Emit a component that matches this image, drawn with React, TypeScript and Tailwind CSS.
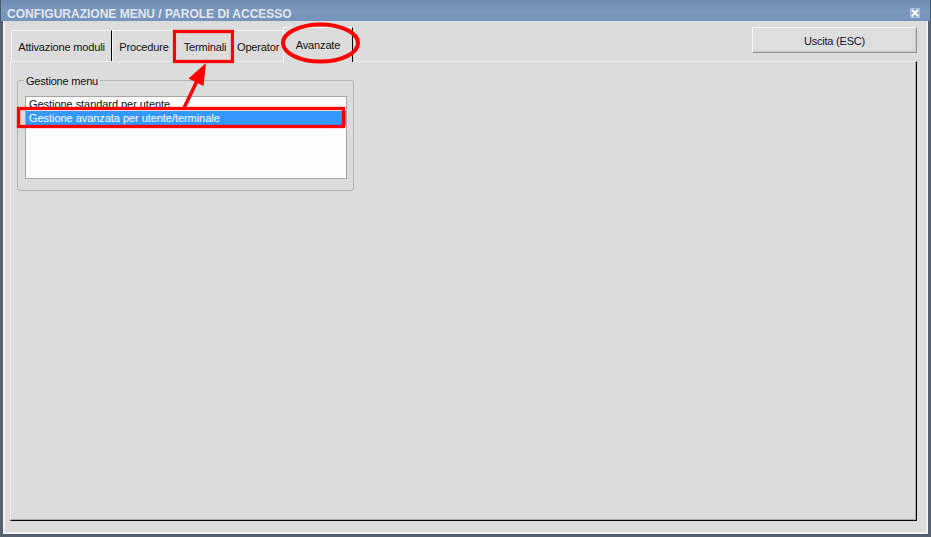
import React from "react"

const tabs = [
  { label: "Attivazione moduli", width: "w-[101px]" },
  { label: "Procedure", width: "w-[64px]" },
  { label: "Terminali", width: "w-[58px]" },
]

function CloseIcon() {
  return (
    <svg width="10" height="10" viewBox="0 0 10 10">
      <rect x="0.5" y="0.5" width="9" height="9" fill="#8aa5c8" stroke="#a9bfdb" />
      <path d="M2.5 2.5 L7.5 7.5 M7.5 2.5 L2.5 7.5" stroke="#ffffff" strokeWidth="2" strokeLinecap="square" />
    </svg>
  )
}

function Annotations() {
  return (
    <svg className="absolute inset-0 z-20 pointer-events-none" width="931" height="537" viewBox="0 0 931 537">
      {/* box around the Terminali tab */}
      <rect x="174.5" y="31.5" width="58" height="30" fill="none" stroke="#ff0000" strokeWidth="3.3" />
      {/* box around the selected list row */}
      <rect x="18.5" y="108.5" width="325" height="18" fill="none" stroke="#ff0000" strokeWidth="3.3" />
      {/* ellipse around Avanzate */}
      <ellipse cx="320.5" cy="43" rx="37.5" ry="18.5" fill="none" stroke="#ff0000" strokeWidth="4" />
      {/* arrow */}
      <line x1="184" y1="108" x2="197" y2="81" stroke="#ff0000" strokeWidth="3.5" />
      <polygon points="206,63 188.5,78.5 203.5,86" fill="#ff0000" />
    </svg>
  )
}

export default function App() {
  return (
    <div
      className="relative w-[931px] h-[537px] flex flex-col bg-[#dcdcdc] text-[#111] overflow-hidden"
      style={{ fontFamily: '"Liberation Sans", Arial, sans-serif' }}
    >
      {/* Title bar */}
      <div className="h-[21px] shrink-0 flex items-start justify-between pl-[6px] pr-[10px] pt-[7px] border-x border-[#4a5a6e] bg-gradient-to-b from-[#6d8bb3] via-[#7a97be] to-[#7694bb]">
        <span className="text-[12px] leading-[14px] font-bold text-[#e2e8f0]">
          CONFIGURAZIONE MENU / PAROLE DI ACCESSO
        </span>
        <div className="mt-[1px]">
          <CloseIcon />
        </div>
      </div>

      {/* Window body */}
      <div className="flex-1 flex border-x-[3px] border-b-[3px] border-[#58626e]">
        <div className="flex-1 flex flex-col border-x-2 border-b-2 border-[#f0f0f0] pl-[5px] pr-[9px] pb-[11px]">
          {/* Tabs + exit button */}
          <div className="h-[40px] shrink-0 flex items-end">
            <div className="ml-[1px] flex items-end text-[11px] leading-[14px] tracking-[-0.15px]">
              {tabs.map((t) => (
                <div
                  key={t.label}
                  className={`${t.width} h-[31px] flex justify-center pt-[9px] border-t border-l border-t-[#f4f4f4] border-l-[#f4f4f4] border-r border-r-black whitespace-nowrap`}
                >
                  {t.label}
                </div>
              ))}
              <div className="w-[49px] h-[31px] pl-[2px] pt-[9px] border-t border-l border-[#f4f4f4] whitespace-nowrap">
                Operator
              </div>
              <div className="relative z-10 -mb-[1px] w-[70px] h-[35px] flex justify-center pt-[10px] bg-[#dcdcdc] border-t border-l border-t-[#f4f4f4] border-l-[#f4f4f4] border-r border-r-black">
                Avanzate
              </div>
            </div>
            <button className="ml-auto self-start mt-[6px] w-[165px] h-[26px] pt-[6px] flex justify-center items-start bg-[#dedede] border border-t-[#f6f6f6] border-l-[#f6f6f6] border-b-[#9a9a9a] border-r-[#9a9a9a] shadow-[inset_-1px_-1px_0_#c4c4c4] text-[11px] leading-[14px] tracking-[-0.2px] text-[#141428]">
              Uscita (ESC)
            </button>
          </div>

          {/* Tab panel */}
          <div className="flex-1 border-t border-l border-[#ededed] border-r border-b border-r-black border-b-black shadow-[inset_-1px_-1px_0_#a8a8a8] pl-[6px] pt-[18px]">
            <div className="relative w-[337px] h-[111px] border border-[#b4b4b4] rounded-[3px]">
              <span className="absolute -top-[7px] left-[6px] px-[2px] bg-[#dcdcdc] text-[11px] leading-[14px] tracking-[-0.2px]">
                Gestione menu
              </span>
              <div className="ml-[7px] mt-[15px] w-[322px] h-[83px] border border-[#a6a6a6] bg-[#fcfcfc] text-[11px] leading-[14px] tracking-[-0.05px]">
                <div className="h-[14px] pl-[3px] whitespace-nowrap">Gestione standard per utente</div>
                <div className="h-[14px] pl-[3px] whitespace-nowrap bg-[#3399ff] text-white">
                  Gestione avanzata per utente/terminale
                </div>
              </div>
            </div>
          </div>
        </div>
      </div>

      <Annotations />
    </div>
  )
}
